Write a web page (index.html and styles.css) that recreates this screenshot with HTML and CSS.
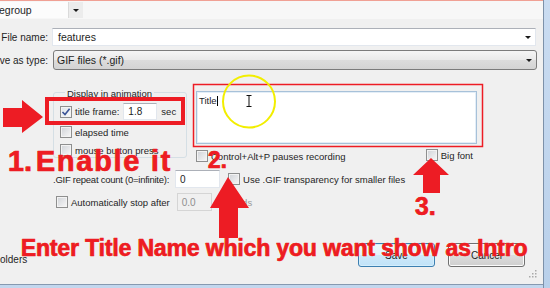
FILE: index.html
```html
<!DOCTYPE html>
<html lang="en">
<head>
<meta charset="utf-8">
<title>Save As</title>
<link rel="stylesheet" href="styles.css">
</head>
<body>
<div class="screen">
  <div class="dialog">
    <div class="topbar">
      <div class="combo"><span class="combo-text">egroup</span><span class="combo-btn"><i class="tri"></i></span></div>
    </div>
    <div class="field-row name-row">
      <span class="label">File name:</span>
      <div class="field text-field"><span class="val">features</span><i class="tri"></i></div>
    </div>
    <div class="field-row type-row">
      <span class="label">ve as type:</span>
      <div class="field select"><span class="val">GIF files (*.gif)</span><i class="tri"></i></div>
    </div>
    <div class="options">
      <div class="top-grid">
        <div class="group">
          <span class="legend">Display in animation</span>
          <div class="chk-row r1">
            <span class="cb checked"><svg width="10" height="10" viewBox="0 0 10 10"><path d="M1.5 5 L4 7.6 L8.6 1.8" fill="none" stroke="#3b5496" stroke-width="1.6"/></svg></span>
            <span class="txt">title frame:</span>
            <span class="num sec-input">1.8</span>
            <span class="unit">sec</span>
          </div>
          <div class="chk-row r2"><span class="cb"></span><span class="txt">elapsed time</span></div>
          <div class="chk-row r3"><span class="cb"></span><span class="txt">mouse button press</span></div>
        </div>
        <div class="title-col">
          <div class="textarea"><span>Title</span><span class="caret"></span></div>
          <div class="title-opts">
            <span class="chk"><span class="cb"></span><span class="txt">Control+Alt+P pauses recording</span></span>
            <span class="chk big"><span class="cb"></span><span class="txt">Big font</span></span>
          </div>
        </div>
      </div>
      <div class="opt-row repeat">
        <span class="repeat-label">.GIF repeat count (0=infinite):</span>
        <span class="num repeat-input">0</span>
        <span class="chk transp"><span class="cb"></span><span class="txt">Use .GIF transparency for smaller files</span></span>
      </div>
      <div class="opt-row stop">
        <span class="chk"><span class="cb"></span><span class="txt">Automatically stop after</span></span>
        <span class="num disabled stop-input">0.0</span>
        <span class="muted">seconds</span>
      </div>
    </div>
    <div class="footer">
      <span class="folders">olders</span>
      <div class="buttons">
        <span class="btn default">Save</span>
        <span class="btn">Cancel</span>
      </div>
    </div>
    <div class="grip-row">
      <svg width="8" height="8" viewBox="0 0 8 8"><g fill="#a9a9a9"><rect x="6" y="0" width="1.5" height="1.5"/><rect x="3" y="3" width="1.5" height="1.5"/><rect x="6" y="3" width="1.5" height="1.5"/><rect x="0" y="6" width="1.5" height="1.5"/><rect x="3" y="6" width="1.5" height="1.5"/><rect x="6" y="6" width="1.5" height="1.5"/></g></svg>
    </div>
  </div>
  <div class="frame-right"></div>
  <div class="frame-bottom"></div>

  <svg class="annot" width="550" height="288" viewBox="0 0 550 288">
    <rect x="47" y="99" width="136" height="24" fill="none" stroke="#ed1c24" stroke-width="4"/>
    <rect x="193.5" y="84.5" width="289" height="62" fill="none" stroke="#ed1c24" stroke-width="1.5"/>
    <circle cx="249" cy="101.5" r="26" fill="none" stroke="#f2ee00" stroke-width="2"/>
    <path d="M246.5 95.5 h5 M249 95.5 v11 M246.5 106.5 h5" stroke="#111" stroke-width="1" fill="none"/>
    <polygon points="3,108 22,108 22,100 43,117 22,133 22,127 3,127" fill="#ed1c24"/>
    <polygon points="228,177 249,208 238,208 238,238 219,238 219,208 210,208" fill="#ed1c24"/>
    <polygon points="431,158 449,175 440,175 440,193 423,193 423,175 413,175" fill="#ed1c24"/>
  </svg>
  <div class="note n1">1.</div>
  <div class="note n1b">Enable it</div>
  <div class="note n2">2.</div>
  <div class="note n3">3.</div>
  <div class="note n4">Enter Title Name which you want show as Intro</div>
</div>
</body>
</html>
```
FILE: styles.css
```css
* { box-sizing: border-box; }
html, body { margin: 0; padding: 0; }
body {
  width: 550px;
  height: 288px;
  overflow: hidden;
  background: #f0f0f0;
  font-family: "Liberation Sans", Arial, sans-serif;
  font-size: 9.5px;
  color: #1e1e1e;
}
.screen {
  position: relative;
  width: 550px;
  height: 288px;
  display: grid;
  grid-template-columns: 543px 7px;
  grid-template-rows: 284px 4px;
}
.dialog {
  grid-column: 1;
  grid-row: 1;
  background: #f0f0f0;
  border-top: 1px solid #f0a094;
  display: flex;
  flex-direction: column;
  overflow: hidden;
}
.frame-right {
  grid-column: 2;
  grid-row: 1 / 3;
  background: linear-gradient(#cadcf1, #b9d0ea);
  border-left: 1px solid #7d91a9;
}
.frame-bottom {
  grid-column: 1;
  grid-row: 2;
  background: #c3d7ee;
  border-top: 1px solid #8699b0;
}

/* top bar */
.topbar {
  height: 18px;
  background: #f7f7f7;
  flex: none;
}
.combo {
  display: flex;
  height: 16px;
  margin-top: 1px;
  width: 83px;
}
.combo-text {
  width: 68px;
  background: #fcfcfc;
  font-size: 10.5px;
  line-height: 16px;
  text-indent: -1px;
  white-space: nowrap;
  overflow: hidden;
}
.combo-btn {
  width: 15px;
  background: #ececec;
  border-left: 1px solid #dadada;
  display: flex;
  align-items: center;
  justify-content: center;
}
.tri {
  display: block;
  width: 0;
  height: 0;
  border-left: 3px solid transparent;
  border-right: 3px solid transparent;
  border-top: 3px solid #1a1a1a;
}

/* file rows */
.field-row {
  display: flex;
  align-items: stretch;
  flex: none;
}
.label {
  font-size: 10px;
  display: flex;
  align-items: center;
  justify-content: flex-end;
  padding-right: 4px;
  white-space: nowrap;
}
.name-row { margin-top: 9px; height: 18px; }
.name-row .label { width: 52px; }
.type-row { margin-top: 4px; height: 20px; }
.type-row .label { width: 53px; padding-right: 5px; }
.field {
  flex: 1;
  display: flex;
  align-items: center;
  justify-content: space-between;
  padding: 0 4px 0 5px;
  font-size: 10.5px;
}
.text-field {
  margin-right: 7px;
  background: #fff;
  border: 1px solid #e2e7ee;
  border-top-color: #acb0b8;
}
.select {
  margin-right: 6px;
  padding-left: 3px;
  border: 1px solid #7b7b7b;
  border-radius: 3px;
  background: linear-gradient(#f5f5f5, #e9e9e9 50%, #dcdcdc 51%, #d3d3d3);
}

/* options */
.options {
  padding-left: 53px;
  flex: none;
}
.top-grid {
  margin-top: 21px;
  display: grid;
  grid-template-columns: 134px 281px;
  column-gap: 9px;
  align-items: start;
}
.group {
  margin-top: 1px;
  height: 66px;
  border: 1px solid #d5dfe5;
  border-radius: 3px;
  padding-left: 6px;
  display: flex;
  flex-direction: column;
  align-items: flex-start;
}
.legend {
  margin-top: -5px;
  margin-left: 5px;
  padding: 0 2px;
  line-height: 11px;
  height: 11px;
  background: #f0f0f0;
  white-space: nowrap;
}
.chk-row {
  display: flex;
  align-items: center;
  white-space: nowrap;
}
.r1 { margin-top: 4px; height: 17px; }
.r2 { margin-top: 5px; height: 14px; }
.r3 { margin-top: 4px; height: 14px; }
.cb {
  flex: none;
  width: 12px;
  height: 12px;
  border: 1px solid #8e8f8f;
  background: linear-gradient(135deg, #cfd2d7, #f8f8f8);
  box-shadow: inset 0 0 0 1px #f3f3f3;
  display: inline-flex;
  align-items: center;
  justify-content: center;
  margin-right: 3px;
}
.cb.checked { background: linear-gradient(135deg, #dde3ea, #fbfbfb); }
.cb svg { display: block; }
.num {
  display: flex;
  align-items: center;
  height: 17px;
  background: #fff;
  border: 1px solid #e2e7ee;
  border-top-color: #acb0b8;
  padding-left: 4px;
  font-size: 10px;
}
.sec-input { width: 34px; margin-left: 4px; }
.unit { margin-left: 4px; }

.title-col {
  display: flex;
  flex-direction: column;
}
.textarea {
  height: 53px;
  background: #fff;
  border: 1px solid #a7c1d9;
  box-shadow: inset 0 0 0 1px #e4eef7;
  padding: 3px 2px;
  line-height: 11px;
  display: flex;
  align-items: flex-start;
}
.caret {
  display: inline-block;
  width: 1px;
  height: 10px;
  margin-top: 1px;
  margin-left: 0.5px;
  background: #000;
}
.title-opts {
  margin-top: 5px;
  height: 12px;
  display: flex;
  align-items: center;
}
.chk {
  display: inline-flex;
  align-items: center;
  white-space: nowrap;
}
.title-opts .chk:first-child { margin-top: 2px; }
.chk.big { margin-left: auto; margin-right: 4px; }

.opt-row {
  display: flex;
  align-items: center;
  white-space: nowrap;
}
.repeat { margin-top: 9px; height: 18px; }
.repeat-label { letter-spacing: -0.25px; }
.repeat-input { width: 45px; height: 18px; margin-left: 6px; }
.transp { margin-left: 8px; }
.stop { margin-top: 5px; height: 18px; }
.stop .chk { margin-left: 3px; }
.stop-input {
  width: 35px;
  height: 18px;
  margin-left: 7px;
  background: #f0f0f0;
  border: 1px solid #d5d5d5;
  color: #8f8f8f;
}
.muted { margin-left: 5px; color: #9a9a9a; }

/* footer */
.footer {
  margin-top: 32px;
  height: 24px;
  display: flex;
  align-items: flex-start;
  flex: none;
}
.folders {
  font-size: 10px;
  margin-top: 11px;
  line-height: 11px;
}
.buttons {
  margin-left: auto;
  margin-right: 18px;
  display: flex;
  gap: 13px;
}
.btn {
  width: 77px;
  height: 24px;
  display: flex;
  align-items: center;
  justify-content: center;
  font-size: 10px;
  border: 1px solid #707070;
  border-radius: 3px;
  background: linear-gradient(#f3f3f3, #ebebeb 50%, #dddddd 51%, #cfcfcf);
  box-shadow: inset 0 0 0 1px #fbfbfb;
}
.btn.default {
  border-color: #3c7fb1;
  background: linear-gradient(#eef7fd, #e3f2fc 50%, #cfe9fa 51%, #c0e2f8);
  box-shadow: inset 0 0 0 1px #d4eefc;
}
.grip-row {
  margin-top: 3px;
  display: flex;
  justify-content: flex-end;
  padding-right: 6px;
  flex: none;
}
.grip-row svg { display: block; }

/* annotations */
.annot {
  position: absolute;
  left: 0;
  top: 0;
  pointer-events: none;
}
.note {
  position: absolute;
  color: #ed1c24;
  font-family: "Liberation Sans", Arial, sans-serif;
  font-weight: bold;
  white-space: nowrap;
  -webkit-text-stroke: 0.4px #ed1c24;
  text-shadow: -0.6px 0 0 #f26522;
}
.n1 { left: 8px; top: 147px; font-size: 29px; line-height: 29px; }
.n1b { left: 36px; top: 147px; font-size: 29px; line-height: 29px; letter-spacing: 1.7px; }
.n2 { left: 208px; top: 149px; font-size: 23px; line-height: 23px; }
.n3 { left: 415px; top: 194px; font-size: 25px; line-height: 25px; }
.n4 { left: 21px; top: 237px; font-size: 23px; line-height: 23px; letter-spacing: -0.15px; }
```
